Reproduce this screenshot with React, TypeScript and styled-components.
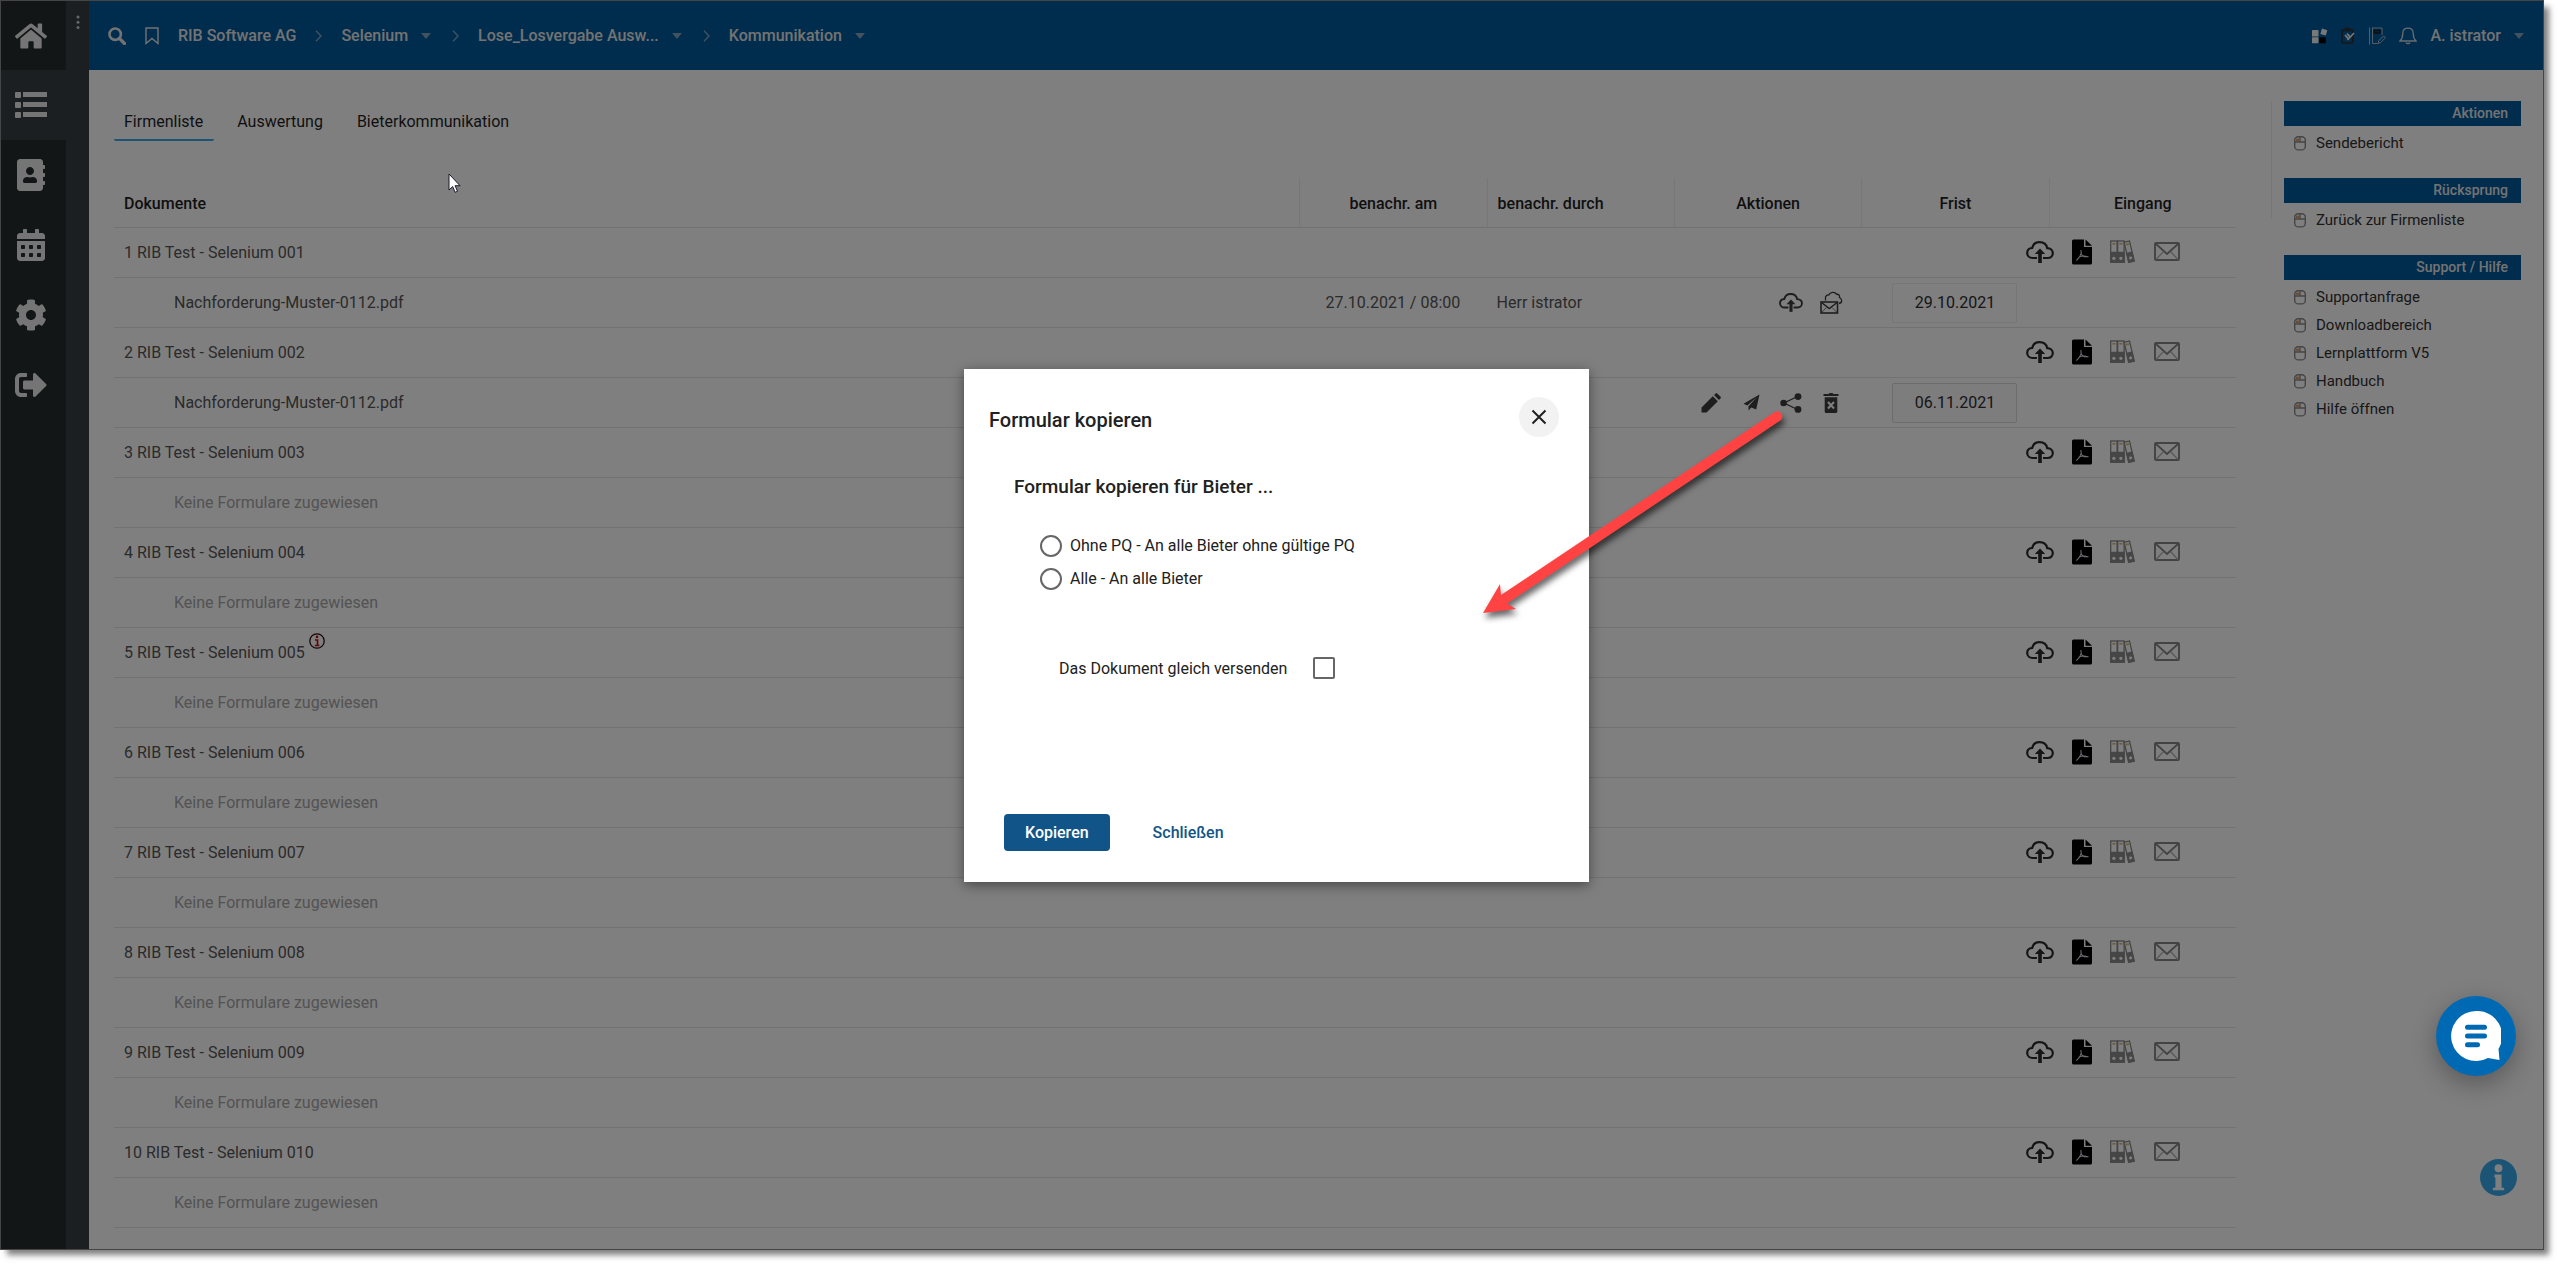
import React from "react";
import styled, { createGlobalStyle, css } from "styled-components";
import { FaHome, FaAddressBook, FaCalendarAlt, FaCog, FaSignOutAlt } from "react-icons/fa";

const GlobalStyle = createGlobalStyle`
  *, *::before, *::after { box-sizing: border-box; }
  body { margin: 0; background: #fff; }
  body, button, input { font-family: Roboto, "Noto Sans", sans-serif; font-size: 16px; }
  button { border: 0; padding: 0; margin: 0; background: none; color: inherit; cursor: pointer; }
  a { color: inherit; text-decoration: none; }
  svg { display: block; flex: none; }
`;

const Page = styled.div`
  min-height: 100vh;
  padding: 0 15px 14px 0;
  display: flex;
`;

const Frame = styled.div`
  position: relative;
  flex: 1;
  display: flex;
  border: 1px solid #454545;
  background: #fff;
  box-shadow: 6px 6px 6px -1px rgba(0, 0, 0, 0.5);
`;

const Rail = styled.nav`
  width: 65px;
  display: flex;
  flex-direction: column;
  background: #252d2f;
  color: #ebebeb;
`;

const RailItem = styled.a<{ $active?: boolean }>`
  height: 70px;
  width: ${(p) => (p.$active ? "88px" : "65px")};
  padding-left: 14px;
  display: flex;
  align-items: center;
  background: ${(p) => (p.$active ? "#393f45" : "transparent")};

  &:first-child {
    height: 69px;
  }
`;

const RailIcon = styled.span`
  width: 32px;
  display: flex;
  justify-content: center;
`;

const Strip = styled.div`
  width: 23px;
  padding-top: 14px;
  background: #393f45;
  color: #ccc;
  display: flex;
  justify-content: center;
  align-items: flex-start;
`;

const Body = styled.div`
  flex: 1;
  min-width: 0;
  display: flex;
  flex-direction: column;
`;

const TopBar = styled.header`
  height: 69px;
  padding: 0 19px;
  background: #00589a;
  color: #e6e6e6;
  display: flex;
  align-items: center;
  justify-content: space-between;
`;

const Crumbs = styled.div`
  display: flex;
  align-items: center;
  gap: 19px;
  font-weight: 500;
`;

const Crumb = styled.a`
  display: flex;
  align-items: center;
  gap: 13px;
`;

const CrumbTail = styled(Crumb)`
  padding-right: 2px;
`;

const Tools = styled.div`
  display: flex;
  align-items: center;
  gap: 13px;
  font-weight: 500;
`;

const Account = styled.button`
  display: flex;
  align-items: center;
  gap: 13px;
  font-weight: 500;
`;

const Columns = styled.div`
  flex: 1;
  display: flex;
  align-items: flex-start;
  padding: 31px 22px 20px 25px;
`;

const Main = styled.main`
  flex: 1;
  min-width: 0;
  padding-right: 35px;
`;

const Tabs = styled.div`
  display: flex;
  gap: 13px;
  margin-bottom: 37px;
`;

const Tab = styled.a<{ $active?: boolean }>`
  height: 40px;
  padding: 0 11px 0 10px;
  line-height: 42px;
  color: #1f1f1f;
  border-bottom: 2px solid ${(p) => (p.$active ? "#36a8e8" : "transparent")};
  border-radius: 0 0 2px 2px;
`;

const Table = styled.table`
  width: 100%;
  table-layout: fixed;
  border-collapse: separate;
  border-spacing: 0;
  color: #565656;
`;

const NameCol = styled.col``;
const DataCol = styled.col`
  width: 8.83%;
`;

const line = css`
  height: 50px;
  border-bottom: 1px solid #e4e4e4;
`;

const HeadCell = styled.th<{ $align?: string; $first?: boolean }>`
  ${line}
  padding: 2px 10px 0;
  text-align: ${(p) => p.$align || "center"};
  font-weight: 500;
  color: #1f1f1f;
  border-left: ${(p) => (p.$first ? "0" : "1px solid #eee")};
`;

const Cell = styled.td<{ $align?: string; $indent?: boolean; $muted?: boolean }>`
  ${line}
  padding: 0 10px 0 ${(p) => (p.$indent ? "60px" : "10px")};
  text-align: ${(p) => p.$align || "left"};
  color: ${(p) => (p.$muted ? "#a6a6a6" : "inherit")};
`;

const IconRow = styled.div<{ $inset: number; $gap: number }>`
  display: flex;
  align-items: center;
  justify-content: flex-end;
  gap: ${(p) => p.$gap}px;
  padding-right: ${(p) => p.$inset}px;
  color: #3c3c3c;
`;

const FirmIcons = styled(IconRow)`
  padding-bottom: 2px;
  color: #2a2a2a;
`;

const IconButton = styled.button<{ $width: number }>`
  width: ${(p) => p.$width}px;
  display: flex;
  justify-content: center;
`;

const DateField = styled.input<{ $editable?: boolean }>`
  width: 125px;
  height: 40px;
  padding: 0;
  display: block;
  margin: 0 auto;
  text-align: center;
  color: #2e2e2e;
  border: 1px solid ${(p) => (p.$editable ? "#d8d8d8" : "#ececec")};
  border-radius: 2px;
  background: ${(p) => (p.$editable ? "#fafafa" : "#fff")};
`;

const FirmName = styled.span`
  display: inline-flex;
  align-items: flex-start;
  line-height: 20px;
`;

const Badge = styled.span`
  margin: -10px 0 0 4px;
`;

const Aside = styled.aside`
  width: 250px;
  display: flex;
  flex-direction: column;
  gap: 21px;
  padding-left: 13px;
  background: linear-gradient(#ececec, #ececec) 0 0 / 1px 118px no-repeat;
`;

const GroupTitle = styled.h2`
  margin: 0 0 3px;
  height: 25px;
  padding-right: 13px;
  background: #00589a;
  color: #e6e6e6;
  font-size: 14px;
  line-height: 24px;
  font-weight: 500;
  text-align: right;
`;

const GroupLink = styled.a`
  height: 28px;
  padding-left: 10px;
  display: flex;
  align-items: center;
  gap: 10px;
  font-size: 15px;
  color: #303030;
`;

const InfoButton = styled.button`
  position: absolute;
  right: 26px;
  bottom: 53px;
`;

const Backdrop = styled.div`
  position: absolute;
  inset: 0;
  padding: 1px 0 0 9px;
  background: rgba(0, 0, 0, 0.5);
  display: flex;
  align-items: center;
  justify-content: center;
`;

const Dialog = styled.form`
  position: relative;
  width: 625px;
  min-height: 513px;
  padding: 28px 30px 31px 25px;
  display: flex;
  flex-direction: column;
  background: #fff;
  color: #212121;
  box-shadow: 0 3px 12px rgba(0, 0, 0, 0.45);
`;

const DialogHead = styled.div`
  display: flex;
  justify-content: space-between;
  align-items: flex-start;
`;

const DialogTitle = styled.h1`
  margin: 11px 0 0;
  font-size: 20px;
  line-height: 24px;
  font-weight: 500;
`;

const CloseButton = styled.button`
  width: 40px;
  height: 40px;
  border-radius: 50%;
  background: #f2f2f2;
  display: flex;
  align-items: center;
  justify-content: center;
`;

const Fields = styled.fieldset`
  border: 0;
  margin: 0;
  padding: 38px 0 0 25px;
`;

const Legend = styled.legend`
  float: left;
  width: 100%;
  padding: 0;
  margin-bottom: 30px;
  font-size: 19px;
  line-height: 24px;
  font-weight: 500;
`;

const Choice = styled.label`
  clear: both;
  height: 33px;
  padding-left: 26px;
  display: flex;
  align-items: center;
  gap: 8px;
`;

const Radio = styled.input`
  appearance: none;
  width: 22px;
  height: 22px;
  margin: 0;
  border: 2px solid #666;
  border-radius: 50%;
`;

const SendLabel = styled.label`
  margin-top: 62px;
  padding-left: 70px;
  display: flex;
  align-items: center;
  gap: 26px;
`;

const Check = styled.input`
  appearance: none;
  width: 22px;
  height: 22px;
  margin: 0;
  border: 2px solid #666;
  border-radius: 2px;
`;

const DialogFoot = styled.div`
  margin-top: auto;
  padding-left: 15px;
  display: flex;
  gap: 22px;
`;

const Action = styled.button<{ $primary?: boolean }>`
  height: 37px;
  padding: 0 21px;
  border-radius: 4px;
  font-weight: 500;
  background: ${(p) => (p.$primary ? "#115588" : "transparent")};
  color: ${(p) => (p.$primary ? "#fff" : "#115588")};
`;

const ArrowLayer = styled.svg`
  position: absolute;
  left: 510px;
  top: 31px;
  pointer-events: none;
  overflow: visible;
  filter: drop-shadow(2px 5px 3px rgba(0, 0, 0, 0.6));
`;

const Pointer = styled.svg`
  position: absolute;
  left: 447px;
  top: 172px;
`;

const ChatButton = styled.button`
  position: absolute;
  right: 27px;
  bottom: 173px;
  width: 80px;
  height: 80px;
  border-radius: 50%;
  background: #0069b4;
  box-shadow: 0 8px 26px rgba(0, 0, 0, 0.3);
  display: flex;
  align-items: center;
  justify-content: center;
`;

const ListIcon = () => (
  <svg width="32" height="28" viewBox="0 0 32 28" fill="currentColor">
    {[0, 10, 20].map((y) => (
      <g key={y}>
        <rect x="0" y={y + 1} width="6" height="6" rx="1" />
        <rect x="8" y={y + 1} width="24" height="5" />
      </g>
    ))}
  </svg>
);

const Dots = () => (
  <svg width="4" height="16" fill="currentColor">
    <circle cx="2" cy="2" r="1.5" />
    <circle cx="2" cy="7.3" r="1.5" />
    <circle cx="2" cy="12.6" r="1.5" />
  </svg>
);

const Search = () => (
  <svg width="18" height="18" viewBox="0 0 18 18" fill="none" stroke="currentColor" strokeWidth="2.6">
    <circle cx="7.2" cy="7.2" r="5.7" />
    <path d="M11.5 11.5L16.5 16.5" strokeWidth="3.2" strokeLinecap="round" />
  </svg>
);

const Bookmark = () => (
  <svg width="14" height="18" viewBox="0 0 14 18" fill="none" stroke="currentColor" strokeWidth="1.4">
    <path d="M1 1h12v15.5l-6-5-6 5z" />
  </svg>
);

const Chevron = () => (
  <svg width="7" height="12" viewBox="0 0 7 12" fill="none" stroke="#7fa6c6" strokeWidth="1.4">
    <path d="M1 .8l5 5.2-5 5.2" />
  </svg>
);

const Caret = () => (
  <svg width="10" height="6" viewBox="0 0 10 6" fill="#85a5bf">
    <path d="M0 0h10L5 6z" />
  </svg>
);

const Tiles = () => (
  <svg width="16" height="16" viewBox="0 0 16 16" fill="#f0f0f0">
    <rect x="0" y="2" width="6.5" height="6.5" rx=".5" />
    <rect x="0" y="9.3" width="6.5" height="6" rx=".5" />
    <rect x="7.3" y="9.3" width="6.5" height="6" fill="#000" />
    <path d="M10 .6l5.4 1.6-1.7 5.4-5.4-1.6z" />
  </svg>
);

const Clipboard = () => (
  <svg width="14" height="17" viewBox="0 0 14 17" fill="none" stroke="#2a3238" strokeWidth="1.8">
    <rect x="1" y="2.8" width="10.8" height="13" rx="1.6" />
    <path d="M3.5 2.6h6" strokeWidth="3.6" />
    <path d="M4 8l3.5 3.8M6 6.5l3.5 4M6.5 13l6.5-7" stroke="#f0f0f0" strokeWidth="1.7" />
  </svg>
);

const Notebook = () => (
  <svg width="18" height="18" viewBox="0 0 18 18" fill="none" stroke="#a9bdd0" strokeWidth="1">
    <path d="M1.5 .5v17M4.5 .5v16h5M4.5 1h9.5v7" />
    <rect x="6.5" y="3.5" width="5.5" height="2.5" stroke="#14202c" strokeWidth="1.6" />
    <path d="M10 16.5l.8-3 5-4.5 1.6 1.8-4.8 4.8z" />
  </svg>
);

const Bell = () => (
  <svg width="18" height="18" viewBox="0 0 18 18" fill="none" stroke="#cfd9e2" strokeWidth="1.3">
    <path d="M9 1.2c-3.4 0-5.2 2.4-5.2 5.2 0 4-1 5.8-2.8 7.6h16c-1.8-1.8-2.8-3.6-2.8-7.6C14.2 3.6 12.4 1.2 9 1.2zM7 15.5c.6 1.5 3.4 1.5 4 0" />
  </svg>
);

const CloudUp = ({ size = 28 }: { size?: number }) => (
  <svg width={size} height={(size * 22) / 28} viewBox="0 0 28 22" fill="none" stroke="currentColor" strokeWidth="2.2">
    <path d="M11 17H6.5C3.5 17 1.2 14.8 1.2 12S3.3 7.2 6.2 7C7 3.6 9.8 1.2 13.5 1.2c4 0 7 2.4 7.7 5.9 3.2.2 5.6 2.2 5.6 5S24.6 17 21.7 17H17" />
    <path d="M14 22V10" strokeWidth="3.6" />
    <path d="M8.8 13L14 7.5l5.2 5.5z" fill="currentColor" stroke="none" />
  </svg>
);

const Pdf = () => (
  <svg width="20" height="26" viewBox="0 0 20 26">
    <path d="M1.5 .5h10.5v7.5h8v16a1.5 1.5 0 0 1-1.5 1.5h-17A1.5 1.5 0 0 1 0 24V2A1.5 1.5 0 0 1 1.5 .5zM13.5.5L20 6.8h-6.5z" fill="#000" />
    <path d="M8.8 11c1 3-.4 7-4.4 10.5M9 14.5c1.2 3 4 3.8 7.5 3M6.5 18.5c3-1.8 6-2 9.5-.5" stroke="#d8d8e4" strokeWidth="1.1" fill="none" />
  </svg>
);

const Binders = () => (
  <svg width="26" height="23" viewBox="0 0 26 23" fill="none" stroke="#8c8c8c" strokeWidth="1.3">
    {[0.7, 7.7].map((x) => (
      <g key={x}>
        <rect x={x} y="1" width="6.4" height="21.2" />
        <path d={`M${x} 12.5h6.4v9.7h-6.4z`} fill="#8c8c8c" />
        <path d={`M${x + 1.7} 3.8h3`} stroke="#d8ba70" strokeWidth="1.6" />
        <circle cx={x + 3.2} cy="18.3" r="1.6" fill="#fff" stroke="none" />
      </g>
    ))}
    <g transform="rotate(-13 18 10)">
      <rect x="16" y="1.5" width="5.5" height="20.5" />
      <path d="M16 13h5.5v9h-5.5z" fill="#8c8c8c" />
      <path d="M17.3 4.3h3" stroke="#d8ba70" strokeWidth="1.6" />
      <circle cx="18.8" cy="18.3" r="1.5" fill="#fff" stroke="none" />
    </g>
  </svg>
);

const Mail = () => (
  <svg width="26" height="19" viewBox="0 0 26 19" fill="none" stroke="#868686" strokeWidth="1.9">
    <rect x="1" y="1" width="24" height="17" rx="1" />
    <path d="M1.5 1.5L13 12 24.5 1.5" strokeWidth="1.7" />
    <path d="M2 17.5l7.5-8M24 17.5l-7.5-8" stroke="#b0b0b0" strokeWidth="1.2" />
  </svg>
);

const CloudMail = () => (
  <svg width="23" height="23" viewBox="0 0 23 23" fill="none" stroke="currentColor" strokeWidth="1.3">
    <path d="M5.5 9.5V7.5C5 5.5 7 3.5 8.8 4 10 .8 15 .3 16.5 3.3c2.5-.3 3.5 1.7 3 3.2 3 1.5 3 5.5-.5 6" />
    <rect x="1" y="11" width="16.5" height="11" strokeWidth="1.6" />
    <path d="M1.5 11.5l7.8 6 7.8-6" strokeWidth="1.5" />
    <path d="M1.5 21.5l5-5M17 21.5l-5-5" strokeWidth=".7" />
  </svg>
);

const Pencil = () => (
  <svg width="20" height="20" viewBox="0 0 20 20" fill="currentColor">
    <path d="M.5 19.5v-5L11.8 3.2l5 5L5.5 19.5zM13 2l1.8-1.6a1 1 0 0 1 1.4 0l3.4 3.4a1 1 0 0 1 0 1.4L18 7z" />
  </svg>
);

const Plane = () => (
  <svg width="17" height="17" viewBox="0 0 17 17" fill="currentColor">
    <path d="M16.5.5L.5 9.8l3.8 1.8L14 3 5.5 12.2v4.3l2.8-3 4.9 2z" />
  </svg>
);

const Share = () => (
  <svg width="22" height="20" viewBox="0 0 22 20" fill="currentColor">
    <path d="M17.5 3.5L4 10l13.5 6.5" fill="none" stroke="currentColor" strokeWidth="1.3" />
    <circle cx="3.6" cy="10" r="3.3" />
    <circle cx="18" cy="3.6" r="3.4" />
    <circle cx="18" cy="16.4" r="3.4" />
  </svg>
);

const Trash = () => (
  <svg width="16" height="20" viewBox="0 0 16 20" fill="currentColor">
    <path d="M.5 1h5l1-1h3l1 1h5v2H.5zM1.7 4.2h12.6v14.3A1.5 1.5 0 0 1 12.8 20H3.2a1.5 1.5 0 0 1-1.5-1.5z" />
    <path d="M5 9l6 6.5M11 9l-6 6.5" stroke="#fff" strokeWidth="2" />
  </svg>
);

const Alert = () => (
  <svg width="16" height="16" viewBox="0 0 16 16" fill="none">
    <circle cx="8" cy="8" r="7.2" stroke="#2a0c0c" strokeWidth="1.3" />
    <circle cx="8" cy="3.9" r="1.3" fill="#c01010" />
    <path d="M6 7h2.5v5.5M5.800 12.500h4.600" stroke="#c01010" strokeWidth="1.700" />
  </svg>
);

const Mouse = () => (
  <svg width="12" height="15" viewBox="0 0 12 15" fill="none" stroke="#8a8a8a" strokeWidth="1.4">
    <rect x=".7" y=".7" width="10.6" height="13.2" rx="3.5" />
    <path d="M.7 6h10.6M6 1v5" />
    <path d="M2 2.5h3v2.5H2z" fill="#d99a6c" stroke="none" />
  </svg>
);

const InfoIcon = () => (
  <svg width="37" height="37" viewBox="0 0 36 36">
    <circle cx="18" cy="18" r="18" fill="#36a8e8" />
    <circle cx="18" cy="9" r="3.8" fill="#fff" />
    <path d="M14 15h7v13h2.5v2.5h-11V28H15V18h-1z" fill="#fff" />
  </svg>
);

const ChatIcon = () => (
  <svg width="50" height="50" viewBox="0 0 50 50">
    <path d="M25 0a25 25 0 1 0 12 47l11.5 2-1-11A25 25 0 0 0 25 0z" fill="#fff" />
    <path d="M16.5 16.3h17M16.5 25h17M16.5 33.7h10" stroke="#0069b4" strokeWidth="5" strokeLinecap="round" />
  </svg>
);

const firms: { n: number; doc?: "sent" | "draft"; alert?: boolean }[] = [
  { n: 1, doc: "sent" },
  { n: 2, doc: "draft" },
  { n: 3 },
  { n: 4 },
  { n: 5, alert: true },
  { n: 6 },
  { n: 7 },
  { n: 8 },
  { n: 9 },
  { n: 10 },
];

const groups = [
  { title: "Aktionen", links: ["Sendebericht"] },
  { title: "Rücksprung", links: ["Zurück zur Firmenliste"] },
  {
    title: "Support / Hilfe",
    links: ["Supportanfrage", "Downloadbereich", "Lernplattform V5", "Handbuch", "Hilfe öffnen"],
  },
];

function DocumentRow({ doc }: { doc?: "sent" | "draft" }) {
  if (!doc) {
    return (
      <tr>
        <Cell $indent $muted colSpan={6}>
          Keine Formulare zugewiesen
        </Cell>
      </tr>
    );
  }
  const sent = doc === "sent";
  return (
    <tr>
      <Cell $indent>Nachforderung-Muster-0112.pdf</Cell>
      <Cell $align="center">{sent ? "27.10.2021 / 08:00" : ""}</Cell>
      <Cell>{sent ? "Herr istrator" : ""}</Cell>
      <Cell>
        <IconRow $inset={8} $gap={16}>
          {sent ? (
            <>
              <IconButton $width={24} type="button" aria-label="Hochladen"><CloudUp size={24} /></IconButton>
              <IconButton $width={24} type="button" aria-label="Nachricht"><CloudMail /></IconButton>
            </>
          ) : (
            <>
              <IconButton $width={24} type="button" aria-label="Bearbeiten"><Pencil /></IconButton>
              <IconButton $width={24} type="button" aria-label="Senden"><Plane /></IconButton>
              <IconButton $width={24} type="button" aria-label="Kopieren"><Share /></IconButton>
              <IconButton $width={24} type="button" aria-label="Löschen"><Trash /></IconButton>
            </>
          )}
        </IconRow>
      </Cell>
      <Cell>
        <DateField
          $editable={!sent}
          readOnly={sent}
          aria-label="Frist"
          defaultValue={sent ? "29.10.2021" : "06.11.2021"}
        />
      </Cell>
      <Cell />
    </tr>
  );
}

export default function App() {
  return (
    <>
      <GlobalStyle />
      <Page>
        <Frame>
          <Rail>
            <RailItem href="#" aria-label="Start"><RailIcon><FaHome size={32} /></RailIcon></RailItem>
            <RailItem href="#" aria-label="Liste" $active><RailIcon><ListIcon /></RailIcon></RailItem>
            <RailItem href="#" aria-label="Kontakte"><RailIcon><FaAddressBook size={32} /></RailIcon></RailItem>
            <RailItem href="#" aria-label="Kalender"><RailIcon><FaCalendarAlt size={32} /></RailIcon></RailItem>
            <RailItem href="#" aria-label="Einstellungen"><RailIcon><FaCog size={32} /></RailIcon></RailItem>
            <RailItem href="#" aria-label="Abmelden"><RailIcon><FaSignOutAlt size={32} /></RailIcon></RailItem>
          </Rail>
          <Strip><Dots /></Strip>
          <Body>
            <TopBar>
              <Crumbs>
                <Search />
                <Bookmark />
                <Crumb href="#">RIB Software AG</Crumb>
                <Chevron />
                <CrumbTail href="#">Selenium <Caret /></CrumbTail>
                <Chevron />
                <CrumbTail href="#">Lose_Losvergabe Ausw... <Caret /></CrumbTail>
                <Chevron />
                <CrumbTail href="#">Kommunikation <Caret /></CrumbTail>
              </Crumbs>
              <Tools>
                <Tiles />
                <Clipboard />
                <Notebook />
                <Bell />
                <Account type="button">A. istrator <Caret /></Account>
              </Tools>
            </TopBar>
            <Columns>
              <Main>
                <Tabs>
                  <Tab href="#" $active>Firmenliste</Tab>
                  <Tab href="#">Auswertung</Tab>
                  <Tab href="#">Bieterkommunikation</Tab>
                </Tabs>
                <Table>
                  <colgroup>
                    <NameCol />
                    <DataCol /><DataCol /><DataCol /><DataCol /><DataCol />
                  </colgroup>
                  <thead>
                    <tr>
                      <HeadCell $align="left" $first>Dokumente</HeadCell>
                      <HeadCell>benachr. am</HeadCell>
                      <HeadCell $align="left">benachr. durch</HeadCell>
                      <HeadCell>Aktionen</HeadCell>
                      <HeadCell>Frist</HeadCell>
                      <HeadCell>Eingang</HeadCell>
                    </tr>
                  </thead>
                  <tbody>
                    {firms.map((f) => (
                      <React.Fragment key={f.n}>
                        <tr>
                          <Cell colSpan={4}>
                            <FirmName>
                              {`${f.n} RIB Test - Selenium ${String(f.n).padStart(3, "0")}`}
                              {f.alert && <Badge><Alert /></Badge>}
                            </FirmName>
                          </Cell>
                          <Cell colSpan={2}>
                            <FirmIcons $inset={46} $gap={18}>
                              <IconButton $width={28} type="button" aria-label="Hochladen"><CloudUp /></IconButton>
                              <IconButton $width={20} type="button" aria-label="PDF"><Pdf /></IconButton>
                              <IconButton $width={26} type="button" aria-label="Ordner"><Binders /></IconButton>
                              <IconButton $width={26} type="button" aria-label="Nachricht"><Mail /></IconButton>
                            </FirmIcons>
                          </Cell>
                        </tr>
                        <DocumentRow doc={f.doc} />
                      </React.Fragment>
                    ))}
                  </tbody>
                </Table>
              </Main>
              <Aside>
                {groups.map((g) => (
                  <section key={g.title}>
                    <GroupTitle>{g.title}</GroupTitle>
                    {g.links.map((l) => (
                      <GroupLink href="#" key={l}><Mouse />{l}</GroupLink>
                    ))}
                  </section>
                ))}
              </Aside>
            </Columns>
          </Body>
          <InfoButton type="button" aria-label="Info"><InfoIcon /></InfoButton>
          <Backdrop>
            <Dialog role="dialog" aria-labelledby="copy-title">
              <DialogHead>
                <DialogTitle id="copy-title">Formular kopieren</DialogTitle>
                <CloseButton type="button" aria-label="Dialog schließen">
                  <svg width="16" height="16" viewBox="0 0 16 16" stroke="#212121" strokeWidth="2">
                    <path d="M1.5 1.5l13 13M14.5 1.5l-13 13" />
                  </svg>
                </CloseButton>
              </DialogHead>
              <Fields>
                <Legend>Formular kopieren für Bieter ...</Legend>
                <Choice><Radio type="radio" name="target" />Ohne PQ - An alle Bieter ohne gültige PQ</Choice>
                <Choice><Radio type="radio" name="target" />Alle - An alle Bieter</Choice>
              </Fields>
              <SendLabel>Das Dokument gleich versenden<Check type="checkbox" /></SendLabel>
              <DialogFoot>
                <Action $primary type="button">Kopieren</Action>
                <Action type="button">Schließen</Action>
              </DialogFoot>
              <ArrowLayer width="320" height="230" viewBox="0 0 320 230" fill="#ff4343">
                <path d="M9 213L26 184L27 195L301.5 11.5A5.3 5.3 0 0 1 307 20L33 203.5L42 209Z" />
              </ArrowLayer>
            </Dialog>
          </Backdrop>
          <Pointer width="14" height="21" viewBox="0 0 14 21" fill="#fff" stroke="#1a1a2a" strokeWidth="1">
            <path d="M1 1v16l3.7-3.4 2.4 5.7 2.4-1-2.4-5.6h5z" />
          </Pointer>
          <ChatButton type="button" aria-label="Chat"><ChatIcon /></ChatButton>
        </Frame>
      </Page>
    </>
  );
}
